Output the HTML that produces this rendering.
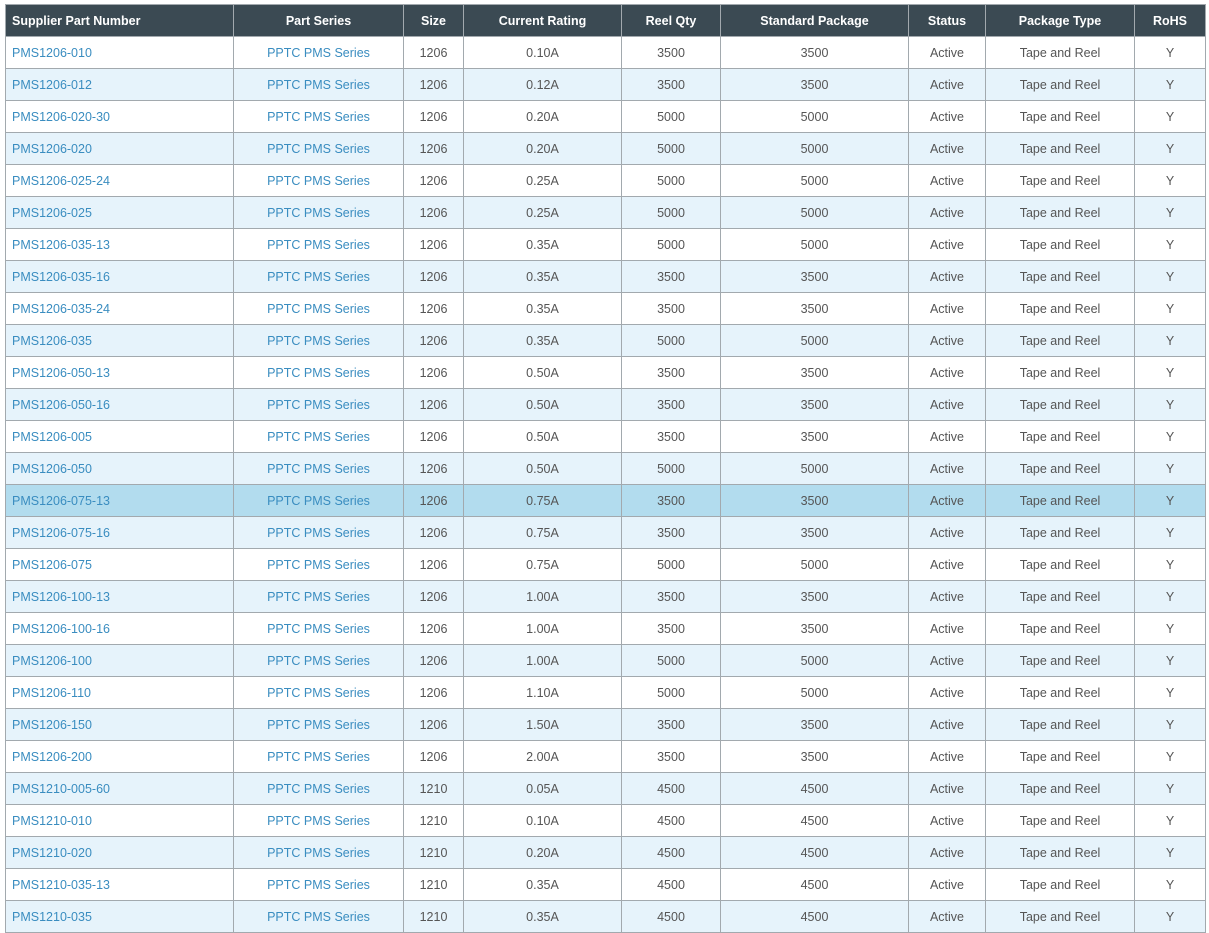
<!DOCTYPE html>
<html><head><meta charset="utf-8"><style>
body{margin:0;background:#fff;overflow:hidden;}
table{position:absolute;left:5px;top:4px;border-collapse:collapse;table-layout:fixed;width:1200px;font-family:"Liberation Sans",sans-serif;font-size:12.5px;color:#555;}
td,th{border:1px solid #a2a9ae;height:31px;padding:0;text-align:center;white-space:nowrap;overflow:hidden;}
th{background:#3b4a53;color:#fff;font-weight:bold;font-size:12.5px;border-color:#a2a9ae;}
th:first-child{text-align:left;padding-left:6px;}
td:first-child{text-align:left;padding-left:6px;color:#3a8dc0;}
td:nth-child(2){color:#3a8dc0;}
tr.a td{background:#e6f3fb;}
tr.h td{background:#b2dcee;}
</style></head><body>
<table>
<colgroup><col style="width:228px"><col style="width:170px"><col style="width:60px"><col style="width:158px"><col style="width:99px"><col style="width:188px"><col style="width:77px"><col style="width:149px"><col style="width:71px"></colgroup>
<tr><th>Supplier Part Number</th><th>Part Series</th><th>Size</th><th>Current Rating</th><th>Reel Qty</th><th>Standard Package</th><th>Status</th><th>Package Type</th><th>RoHS</th></tr>
<tr><td>PMS1206-010</td><td>PPTC PMS Series</td><td>1206</td><td>0.10A</td><td>3500</td><td>3500</td><td>Active</td><td>Tape and Reel</td><td>Y</td></tr>
<tr class="a"><td>PMS1206-012</td><td>PPTC PMS Series</td><td>1206</td><td>0.12A</td><td>3500</td><td>3500</td><td>Active</td><td>Tape and Reel</td><td>Y</td></tr>
<tr><td>PMS1206-020-30</td><td>PPTC PMS Series</td><td>1206</td><td>0.20A</td><td>5000</td><td>5000</td><td>Active</td><td>Tape and Reel</td><td>Y</td></tr>
<tr class="a"><td>PMS1206-020</td><td>PPTC PMS Series</td><td>1206</td><td>0.20A</td><td>5000</td><td>5000</td><td>Active</td><td>Tape and Reel</td><td>Y</td></tr>
<tr><td>PMS1206-025-24</td><td>PPTC PMS Series</td><td>1206</td><td>0.25A</td><td>5000</td><td>5000</td><td>Active</td><td>Tape and Reel</td><td>Y</td></tr>
<tr class="a"><td>PMS1206-025</td><td>PPTC PMS Series</td><td>1206</td><td>0.25A</td><td>5000</td><td>5000</td><td>Active</td><td>Tape and Reel</td><td>Y</td></tr>
<tr><td>PMS1206-035-13</td><td>PPTC PMS Series</td><td>1206</td><td>0.35A</td><td>5000</td><td>5000</td><td>Active</td><td>Tape and Reel</td><td>Y</td></tr>
<tr class="a"><td>PMS1206-035-16</td><td>PPTC PMS Series</td><td>1206</td><td>0.35A</td><td>3500</td><td>3500</td><td>Active</td><td>Tape and Reel</td><td>Y</td></tr>
<tr><td>PMS1206-035-24</td><td>PPTC PMS Series</td><td>1206</td><td>0.35A</td><td>3500</td><td>3500</td><td>Active</td><td>Tape and Reel</td><td>Y</td></tr>
<tr class="a"><td>PMS1206-035</td><td>PPTC PMS Series</td><td>1206</td><td>0.35A</td><td>5000</td><td>5000</td><td>Active</td><td>Tape and Reel</td><td>Y</td></tr>
<tr><td>PMS1206-050-13</td><td>PPTC PMS Series</td><td>1206</td><td>0.50A</td><td>3500</td><td>3500</td><td>Active</td><td>Tape and Reel</td><td>Y</td></tr>
<tr class="a"><td>PMS1206-050-16</td><td>PPTC PMS Series</td><td>1206</td><td>0.50A</td><td>3500</td><td>3500</td><td>Active</td><td>Tape and Reel</td><td>Y</td></tr>
<tr><td>PMS1206-005</td><td>PPTC PMS Series</td><td>1206</td><td>0.50A</td><td>3500</td><td>3500</td><td>Active</td><td>Tape and Reel</td><td>Y</td></tr>
<tr class="a"><td>PMS1206-050</td><td>PPTC PMS Series</td><td>1206</td><td>0.50A</td><td>5000</td><td>5000</td><td>Active</td><td>Tape and Reel</td><td>Y</td></tr>
<tr class="h"><td>PMS1206-075-13</td><td>PPTC PMS Series</td><td>1206</td><td>0.75A</td><td>3500</td><td>3500</td><td>Active</td><td>Tape and Reel</td><td>Y</td></tr>
<tr class="a"><td>PMS1206-075-16</td><td>PPTC PMS Series</td><td>1206</td><td>0.75A</td><td>3500</td><td>3500</td><td>Active</td><td>Tape and Reel</td><td>Y</td></tr>
<tr><td>PMS1206-075</td><td>PPTC PMS Series</td><td>1206</td><td>0.75A</td><td>5000</td><td>5000</td><td>Active</td><td>Tape and Reel</td><td>Y</td></tr>
<tr class="a"><td>PMS1206-100-13</td><td>PPTC PMS Series</td><td>1206</td><td>1.00A</td><td>3500</td><td>3500</td><td>Active</td><td>Tape and Reel</td><td>Y</td></tr>
<tr><td>PMS1206-100-16</td><td>PPTC PMS Series</td><td>1206</td><td>1.00A</td><td>3500</td><td>3500</td><td>Active</td><td>Tape and Reel</td><td>Y</td></tr>
<tr class="a"><td>PMS1206-100</td><td>PPTC PMS Series</td><td>1206</td><td>1.00A</td><td>5000</td><td>5000</td><td>Active</td><td>Tape and Reel</td><td>Y</td></tr>
<tr><td>PMS1206-110</td><td>PPTC PMS Series</td><td>1206</td><td>1.10A</td><td>5000</td><td>5000</td><td>Active</td><td>Tape and Reel</td><td>Y</td></tr>
<tr class="a"><td>PMS1206-150</td><td>PPTC PMS Series</td><td>1206</td><td>1.50A</td><td>3500</td><td>3500</td><td>Active</td><td>Tape and Reel</td><td>Y</td></tr>
<tr><td>PMS1206-200</td><td>PPTC PMS Series</td><td>1206</td><td>2.00A</td><td>3500</td><td>3500</td><td>Active</td><td>Tape and Reel</td><td>Y</td></tr>
<tr class="a"><td>PMS1210-005-60</td><td>PPTC PMS Series</td><td>1210</td><td>0.05A</td><td>4500</td><td>4500</td><td>Active</td><td>Tape and Reel</td><td>Y</td></tr>
<tr><td>PMS1210-010</td><td>PPTC PMS Series</td><td>1210</td><td>0.10A</td><td>4500</td><td>4500</td><td>Active</td><td>Tape and Reel</td><td>Y</td></tr>
<tr class="a"><td>PMS1210-020</td><td>PPTC PMS Series</td><td>1210</td><td>0.20A</td><td>4500</td><td>4500</td><td>Active</td><td>Tape and Reel</td><td>Y</td></tr>
<tr><td>PMS1210-035-13</td><td>PPTC PMS Series</td><td>1210</td><td>0.35A</td><td>4500</td><td>4500</td><td>Active</td><td>Tape and Reel</td><td>Y</td></tr>
<tr class="a"><td>PMS1210-035</td><td>PPTC PMS Series</td><td>1210</td><td>0.35A</td><td>4500</td><td>4500</td><td>Active</td><td>Tape and Reel</td><td>Y</td></tr>
</table>
</body></html>
